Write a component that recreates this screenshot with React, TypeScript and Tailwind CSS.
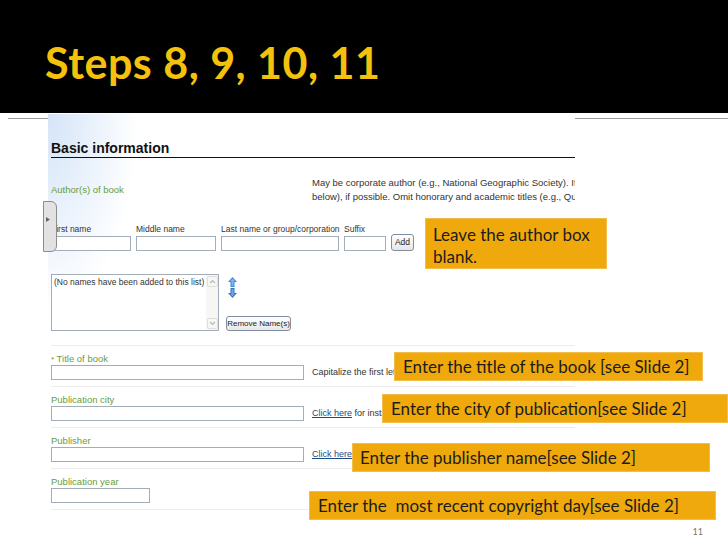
const formFont = { fontFamily: '"Liberation Sans", Arial, sans-serif' };

function Field({ w }: { w: string }) {
  return <div className={`${w} h-[15px] border border-[#a3adba] bg-white`} />;
}

function UpDownArrows() {
  return (
    <div className="flex flex-col gap-[1px]">
      <svg width="9" height="10" viewBox="0 0 9 10">
        <path d="M4.5 0 L9 5 L6.5 5 L6.5 10 L2.5 10 L2.5 5 L0 5 Z" fill="#3b86d8" />
        <path d="M4.5 1.5 L7 4.3 L5.5 4.3 L5.5 9 L3.5 9 L3.5 4.3 L2 4.3 Z" fill="#7fb6ee" />
      </svg>
      <svg width="9" height="10" viewBox="0 0 9 10">
        <path d="M4.5 10 L9 5 L6.5 5 L6.5 0 L2.5 0 L2.5 5 L0 5 Z" fill="#2f74c4" />
        <path d="M4.5 8.5 L7 5.7 L5.5 5.7 L5.5 1 L3.5 1 L3.5 5.7 L2 5.7 Z" fill="#6ea7e2" />
      </svg>
    </div>
  );
}

function Chevron({ up }: { up?: boolean }) {
  return (
    <div className="w-[11px] h-[11px] rounded-[2px] border border-[#dedede] bg-[#f7f7f4] flex items-center justify-center">
      <svg width="7" height="5" viewBox="0 0 7 5">
        <path d={up ? 'M1 4 L3.5 1.5 L6 4' : 'M1 1 L3.5 3.5 L6 1'} stroke="#b8b8b8" strokeWidth="1.2" fill="none" />
      </svg>
    </div>
  );
}

function NameField({ label, w, fieldW }: { label: string; w: string; fieldW: string }) {
  return (
    <div className={`${w} shrink-0`}>
      <div className="h-[13px] leading-[13px] whitespace-nowrap">{label}</div>
      <Field w={fieldW} />
    </div>
  );
}

function FormRow({
  label,
  inputW,
  children,
}: {
  label: React.ReactNode;
  inputW: string;
  children?: React.ReactNode;
}) {
  return (
    <div className="pt-[6px] pb-[6px] border-b border-[#ececec]">
      <div className="h-[13px] leading-[13px] text-[9.5px] text-[#6a9c3c]">{label}</div>
      <div className="flex items-center">
        <Field w={inputW} />
        {children && (
          <div className="ml-[8px] text-[9px] text-[#333] whitespace-nowrap overflow-hidden">{children}</div>
        )}
      </div>
    </div>
  );
}

function Callout({ className, children }: { className: string; children: React.ReactNode }) {
  return (
    <div
      className={`absolute bg-[#efa90c] border border-[#f3bd4c] text-[#1c1c1c] text-[17px] whitespace-pre ${className}`}
      style={{ fontFamily: 'Lato, "Open Sans", sans-serif' }}
    >
      {children}
    </div>
  );
}

export default function App() {
  return (
    <div className="relative w-[728px] h-[546px] bg-white overflow-hidden">
      {/* Slide title */}
      <div className="h-[113px] bg-black pt-[41px] pl-[45px]">
        <h1
          className="text-[43px] leading-none font-bold tracking-[0.5px] text-[#f4c20d]"
          style={{ fontFamily: 'Lato, "Open Sans", sans-serif' }}
        >
          Steps 8, 9, 10, 11
        </h1>
      </div>

      <div className="flex items-start">
        <div className="ml-[8px] w-[40px] mt-[5px] border-t border-[#9b9b9b]" />

        {/* Screenshot of the form */}
        <div
          className="mt-[1px] w-[527px] h-[398px] pl-[3px] overflow-hidden bg-[radial-gradient(90px_200px_at_0_0,#d4e4f8,#ffffff)]"
          style={formFont}
        >
          <div className="h-[44px] flex items-end pb-[1px] border-b border-[#111]">
            <span className="text-[14px] leading-[16px] font-bold text-[#111]">Basic information</span>
          </div>

          <div className="mt-[18px] flex">
            <div className="w-[261px] shrink-0 pt-[7px] leading-[14px] text-[9.5px] text-[#6a9c3c]">
              Author(s) of book
            </div>
            <div className="flex-1 overflow-hidden whitespace-nowrap text-[9.5px] leading-[14px] text-[#333]">
              <div>May be corporate author (e.g., National Geographic Society). If no individual author</div>
              <div>below), if possible. Omit honorary and academic titles (e.g., Queen, Dr., Sir)</div>
            </div>
          </div>

          <div className="mt-[19px] flex items-end gap-[5px] text-[8.5px] text-[#333]">
            <NameField label="First name" w="w-[80px]" fieldW="w-[80px]" />
            <NameField label="Middle name" w="w-[80px]" fieldW="w-[80px]" />
            <NameField label="Last name or group/corporation" w="w-[118px]" fieldW="w-[118px]" />
            <NameField label="Suffix" w="w-[42px]" fieldW="w-[42px]" />
            <button className="w-[23px] h-[17px] shrink-0 rounded-[3px] border border-[#7f8ea3] bg-gradient-to-b from-white to-[#e6e6e6] text-[8.5px] text-[#222]">
              Add
            </button>
          </div>

          <div className="mt-[23px] flex">
            <div className="w-[168px] h-[57px] border border-[#a3adba] flex bg-white">
              <div className="flex-1 pl-[2px] pt-[2px] text-[8.5px] leading-[11px] text-[#333] whitespace-nowrap overflow-hidden">
                (No names have been added to this list)
              </div>
              <div className="w-[12px] bg-[#f6f6f2] flex flex-col justify-between items-center py-[1px]">
                <Chevron up />
                <Chevron />
              </div>
            </div>
            <div className="ml-[7px] h-[57px] flex flex-col justify-between pt-[3px]">
              <div className="pl-[2px]">
                <UpDownArrows />
              </div>
              <button className="w-[65px] h-[15px] rounded-[3px] border border-[#7f8ea3] bg-gradient-to-b from-white to-[#e8e8e8] text-[8px] leading-none text-[#222] whitespace-nowrap">
                Remove Name(s)
              </button>
            </div>
          </div>

          <div className="mt-[14px] border-b border-[#ececec]" />

          <FormRow
            label={
              <>
                <span className="text-[8px]">*</span> Title of book
              </>
            }
            inputW="w-[253px]"
          >
            Capitalize the first letter of the title and subtitle
          </FormRow>
          <FormRow label="Publication city" inputW="w-[253px]">
            <span className="underline text-[#1d4a86]">Click here</span> for instructions
          </FormRow>
          <FormRow label="Publisher" inputW="w-[253px]">
            <span className="underline text-[#1d4a86]">Click here</span> for instructions
          </FormRow>
          <FormRow label="Publication year" inputW="w-[99px]" />
        </div>

        <div className="flex-1 mt-[5px] border-t border-[#9b9b9b]" />
      </div>

      <div className="mt-[15px] pr-[25px] flex justify-end">
        <span className="text-[9px] leading-[10px] text-[#777]" style={{ fontFamily: 'Lato, sans-serif' }}>
          11
        </span>
      </div>

      {/* side tab of the browser window */}
      <div className="absolute left-[43px] top-[201px] w-[14px] h-[51px] rounded-r-[6px] border border-[#8d8d8d] bg-[#e2e2e2] flex items-start pt-[15px] pl-[2px]">
        <svg width="4" height="5" viewBox="0 0 4 5">
          <path d="M0 0 L4 2.5 L0 5 Z" fill="#666" />
        </svg>
      </div>

      {/* orange callouts */}
      <Callout className="left-[425px] top-[218px] w-[182px] h-[51px] pl-[7px] pt-[5px] leading-[22px]">
        {'Leave the author box\nblank.'}
      </Callout>
      <Callout className="left-[394px] top-[352px] w-[309px] h-[29px] pl-[8px] flex items-center">
        Enter the title of the book [see Slide 2]
      </Callout>
      <Callout className="left-[382px] top-[394px] w-[346px] h-[29px] pl-[8px] flex items-center">
        Enter the city of publication[see Slide 2]
      </Callout>
      <Callout className="left-[352px] top-[443px] w-[358px] h-[29px] pl-[7px] flex items-center">
        Enter the publisher name[see Slide 2]
      </Callout>
      <Callout className="left-[309px] top-[491px] w-[407px] h-[29px] pl-[8px] flex items-center">
        Enter the  most recent copyright day[see Slide 2]
      </Callout>
    </div>
  );
}
